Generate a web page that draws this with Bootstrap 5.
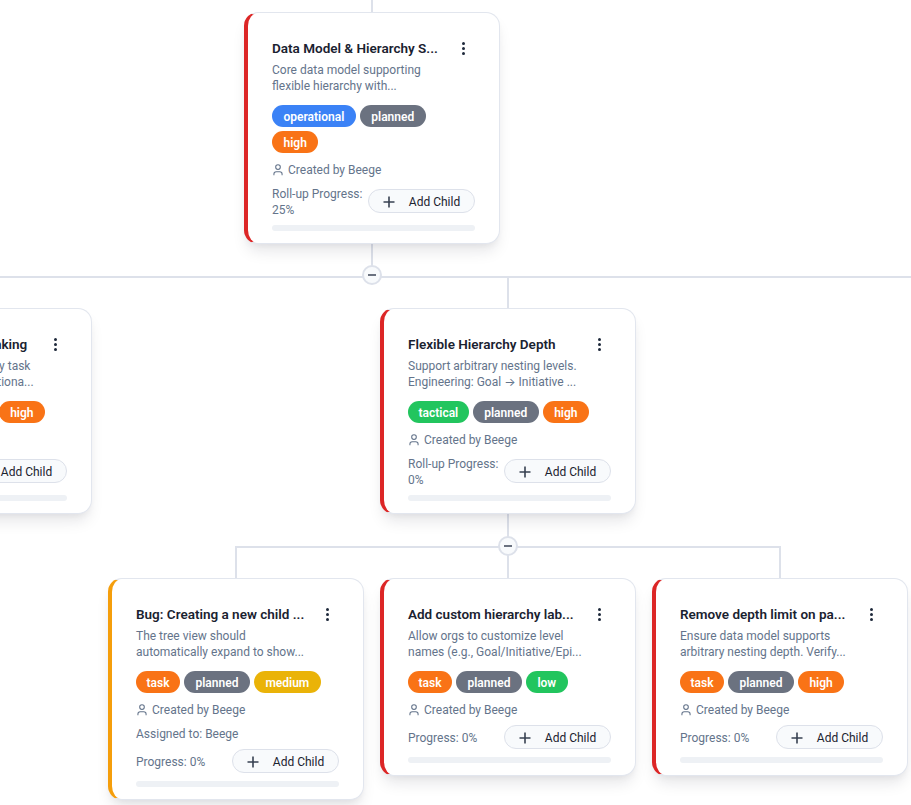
<!DOCTYPE html>
<html lang="en">
<head>
  <meta charset="UTF-8" />
  <meta name="viewport" content="width=device-width, initial-scale=1">
  <title>Hierarchy Tree</title>
  <link href="https://cdn.jsdelivr.net/npm/bootstrap@5.3.0/dist/css/bootstrap.min.css" rel="stylesheet">
  <style>
    body { background: #fff; font-family: Roboto, "Liberation Sans", sans-serif; overflow: hidden; }
    .tree-canvas { position: relative; width: 911px; height: 805px; overflow: hidden; }
    .line { position: absolute; background: #dde1ea; }
    .toggle { position: absolute; width: 20px; height: 20px; border-radius: 50%; background: #f8fafc; border: 2px solid #dde1ea; display: flex; align-items: center; justify-content: center; }
    .toggle i { display: block; width: 8px; height: 2px; background: #6b7280; }
    .node { position: absolute; width: 256px; padding: 23px 24px 12px 24px; border: 1px solid #e2e6ee; border-left: 4px solid #dc2626; border-radius: 14px; box-shadow: 0 10px 15px -3px rgba(15, 23, 42, .1), 0 4px 6px -2px rgba(15, 23, 42, .05); background: #fff; }
    .node-amber { border-left-color: #f59e0b; }
    .node-title { font-size: 13.5px; font-weight: 600; line-height: 24px; color: #1a2230; width: 172px; white-space: nowrap; }
    .dots { width: 14px; display: flex; flex-direction: column; align-items: center; gap: 2px; margin-right: 5px; }
    .dots i { width: 3px; height: 3px; border-radius: 50%; background: #1e293b; }
    .node-desc { font-size: 12px; line-height: 16px; color: #64748b; margin-top: 2px; white-space: nowrap; }
    .arrow-glyph { font-family: Inter, sans-serif; }
    .tags { display: flex; flex-wrap: wrap; gap: 4px; margin-top: 11px; }
    .tag { font-size: 12px; font-weight: 600; line-height: 24px; height: 22px; padding: 0 11.5px; border-radius: 11px; color: #fff; }
    .tag-tight { padding: 0 10.5px; }
    .tag-task { padding: 0 10.5px; }
    .tag-blue { background: #3b82f6; }
    .tag-grey { background: #6b7280; }
    .tag-orange { background: #f97316; }
    .tag-green { background: #22c55e; }
    .tag-yellow { background: #eab308; }
    .meta { font-size: 12px; line-height: 16px; color: #64748b; }
    .created { margin-top: 9px; gap: 3px; }
    .created svg { margin-left: -1px; }
    .foot { margin-top: 8px; }
    .add-btn { width: 107px; height: 24px; margin: -1px 0 1px; padding: 2px 0 0; flex-shrink: 0; font-size: 12px; line-height: 20px; color: #1a2230; background: #f8fafc; border: 1px solid #dde1ea; border-radius: 12px; display: flex; align-items: center; justify-content: center; gap: 14px; }
    .bar-track { height: 6px; border-radius: 3px; background: #eef1f5; margin-top: 7px; }
  </style>
</head>
<body>
  <svg width="0" height="0" class="d-block">
    <symbol id="user" viewBox="0 0 24 24"><circle cx="12" cy="7" r="4" fill="none" stroke="#64748b" stroke-width="1.800"/><path d="M19 21v-2a4 4 0 0 0-4-4H9a4 4 0 0 0-4 4v2" fill="none" stroke="#64748b" stroke-width="1.800"/></symbol>
    <symbol id="plus" viewBox="0 0 12 12"><path d="M6 .5v11M.5 6h11" stroke="#374151" stroke-width="1.600"/></symbol>
  </svg>

  <div class="tree-canvas">
    <!-- connectors -->
    <div class="line" style="left:371px;top:0;width:2px;height:12px"></div>
    <div class="line" style="left:371px;top:244px;width:2px;height:33px"></div>
    <div class="line" style="left:0;top:276px;width:911px;height:2px"></div>
    <div class="line" style="left:507px;top:277px;width:2px;height:31px"></div>
    <div class="line" style="left:507px;top:514px;width:2px;height:64px"></div>
    <div class="line" style="left:235px;top:546px;width:546px;height:2px"></div>
    <div class="line" style="left:235px;top:546px;width:2px;height:32px"></div>
    <div class="line" style="left:779px;top:546px;width:2px;height:32px"></div>
    <div class="toggle" style="left:362px;top:265px"><i></i></div>
    <div class="toggle" style="left:498px;top:536px"><i></i></div>

    <!-- root -->
    <div class="node" style="left:244px;top:12px">
      <div class="d-flex justify-content-between align-items-center">
        <div class="node-title">Data Model &amp; Hierarchy S...</div>
        <div class="dots"><i></i><i></i><i></i></div>
      </div>
      <div class="node-desc">Core data model supporting<br>flexible hierarchy with...</div>
      <div class="tags"><span class="tag tag-blue">operational</span><span class="tag tag-grey">planned</span><span class="tag tag-orange">high</span></div>
      <div class="meta created d-flex align-items-center"><svg width="14" height="14"><use href="#user"/></svg>Created by Beege</div>
      <div class="foot d-flex justify-content-between align-items-center">
        <div class="meta">Roll-up Progress:<br>25%</div>
        <button class="add-btn"><svg width="12" height="12"><use href="#plus"/></svg>Add Child</button>
      </div>
      <div class="bar-track"></div>
    </div>

    <!-- left sibling, cut off by the window -->
    <div class="node" style="left:-164px;top:308px">
      <div class="d-flex justify-content-between align-items-center">
        <div class="node-title">Priority with Stack Ranking</div>
        <div class="dots"><i></i><i></i><i></i></div>
      </div>
      <div class="node-desc">Allow full ranking for every task<br>and priority with any additiona...</div>
      <div class="tags"><span class="tag tag-tight tag-green">tactical</span><span class="tag tag-grey">planned</span><span class="tag tag-orange">high</span></div>
      <div class="meta created d-flex align-items-center"><svg width="14" height="14"><use href="#user"/></svg>Created by Beege</div>
      <div class="foot d-flex justify-content-between align-items-center">
        <div class="meta">Roll-up Progress:<br>0%</div>
        <button class="add-btn"><svg width="12" height="12"><use href="#plus"/></svg>Add Child</button>
      </div>
      <div class="bar-track"></div>
    </div>

    <div class="node" style="left:380px;top:308px">
      <div class="d-flex justify-content-between align-items-center">
        <div class="node-title">Flexible Hierarchy Depth</div>
        <div class="dots"><i></i><i></i><i></i></div>
      </div>
      <div class="node-desc">Support arbitrary nesting levels.<br>Engineering: Goal <span class="arrow-glyph">→</span> Initiative ...</div>
      <div class="tags"><span class="tag tag-tight tag-green">tactical</span><span class="tag tag-grey">planned</span><span class="tag tag-orange">high</span></div>
      <div class="meta created d-flex align-items-center"><svg width="14" height="14"><use href="#user"/></svg>Created by Beege</div>
      <div class="foot d-flex justify-content-between align-items-center">
        <div class="meta">Roll-up Progress:<br>0%</div>
        <button class="add-btn"><svg width="12" height="12"><use href="#plus"/></svg>Add Child</button>
      </div>
      <div class="bar-track"></div>
    </div>

    <!-- children -->
    <div class="node node-amber" style="left:108px;top:578px">
      <div class="d-flex justify-content-between align-items-center">
        <div class="node-title">Bug: Creating a new child ...</div>
        <div class="dots"><i></i><i></i><i></i></div>
      </div>
      <div class="node-desc">The tree view should<br>automatically expand to show...</div>
      <div class="tags"><span class="tag tag-task tag-orange">task</span><span class="tag tag-grey">planned</span><span class="tag tag-yellow">medium</span></div>
      <div class="meta created d-flex align-items-center"><svg width="14" height="14"><use href="#user"/></svg>Created by Beege</div>
      <div class="meta foot">Assigned to: Beege</div>
      <div class="foot d-flex justify-content-between align-items-center">
        <div class="meta">Progress: 0%</div>
        <button class="add-btn"><svg width="12" height="12"><use href="#plus"/></svg>Add Child</button>
      </div>
      <div class="bar-track"></div>
    </div>

    <div class="node" style="left:380px;top:578px">
      <div class="d-flex justify-content-between align-items-center">
        <div class="node-title">Add custom hierarchy lab...</div>
        <div class="dots"><i></i><i></i><i></i></div>
      </div>
      <div class="node-desc">Allow orgs to customize level<br>names (e.g., Goal/Initiative/Epi...</div>
      <div class="tags"><span class="tag tag-task tag-orange">task</span><span class="tag tag-grey">planned</span><span class="tag tag-green">low</span></div>
      <div class="meta created d-flex align-items-center"><svg width="14" height="14"><use href="#user"/></svg>Created by Beege</div>
      <div class="foot d-flex justify-content-between align-items-center">
        <div class="meta">Progress: 0%</div>
        <button class="add-btn"><svg width="12" height="12"><use href="#plus"/></svg>Add Child</button>
      </div>
      <div class="bar-track"></div>
    </div>

    <div class="node" style="left:652px;top:578px">
      <div class="d-flex justify-content-between align-items-center">
        <div class="node-title">Remove depth limit on pa...</div>
        <div class="dots"><i></i><i></i><i></i></div>
      </div>
      <div class="node-desc">Ensure data model supports<br>arbitrary nesting depth. Verify...</div>
      <div class="tags"><span class="tag tag-task tag-orange">task</span><span class="tag tag-grey">planned</span><span class="tag tag-orange">high</span></div>
      <div class="meta created d-flex align-items-center"><svg width="14" height="14"><use href="#user"/></svg>Created by Beege</div>
      <div class="foot d-flex justify-content-between align-items-center">
        <div class="meta">Progress: 0%</div>
        <button class="add-btn"><svg width="12" height="12"><use href="#plus"/></svg>Add Child</button>
      </div>
      <div class="bar-track"></div>
    </div>
  </div>

  <script src="https://cdn.jsdelivr.net/npm/bootstrap@5.3.0/dist/js/bootstrap.bundle.min.js"></script>
</body>
</html>
